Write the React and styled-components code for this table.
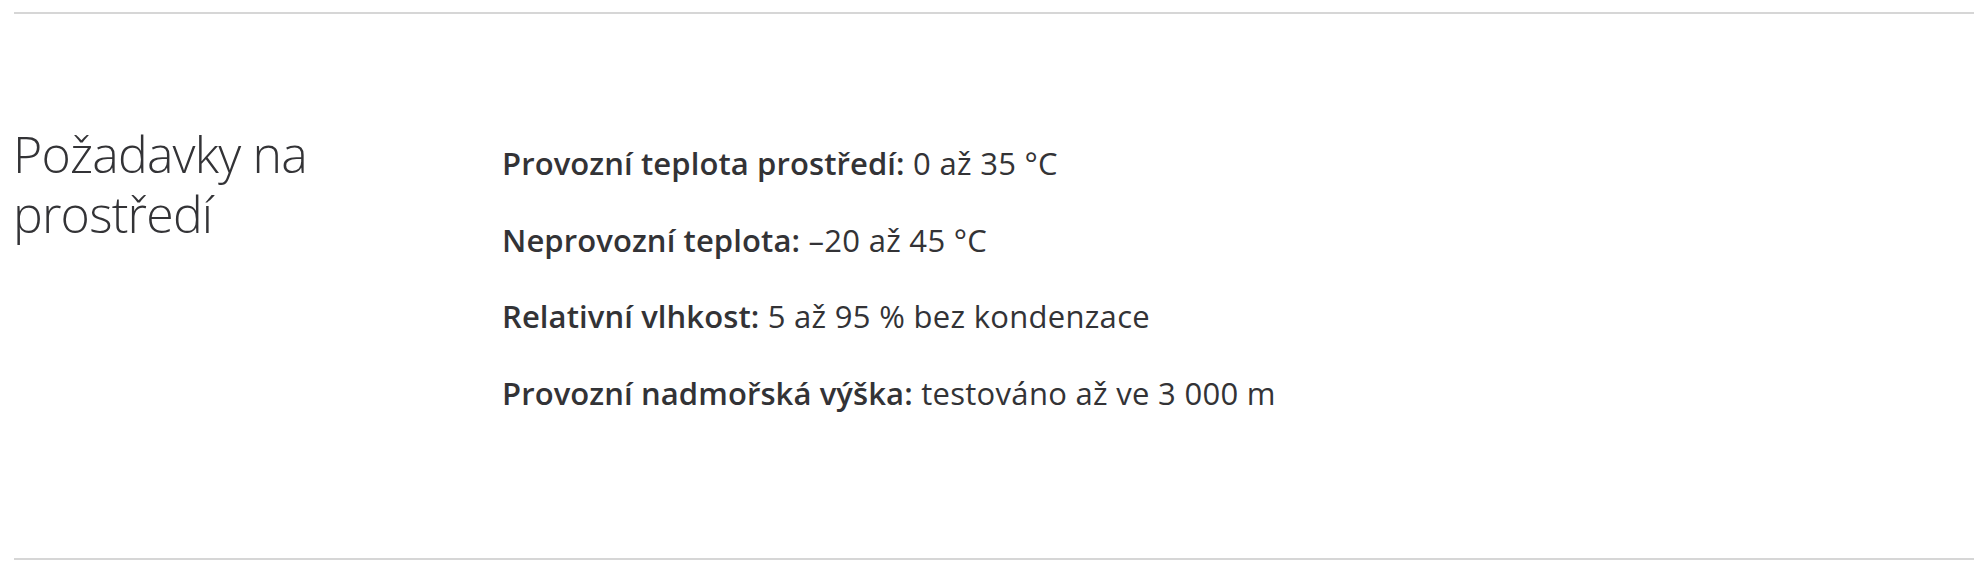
import React from "react";
import styled, { createGlobalStyle } from "styled-components";

const GlobalStyle = createGlobalStyle`
  html, body {
    margin: 0;
    padding: 0;
    background: #ffffff;
  }
  body {
    font-family: "Open Sans", "Noto Sans", "Liberation Sans", sans-serif;
    color: #333336;
    -webkit-font-smoothing: antialiased;
  }
`;

const Page = styled.div`
  padding: 12px 14px 0;
`;

const Section = styled.section`
  display: grid;
  grid-template-columns: 488px 1fr;
  align-items: start;
  border-top: 2px solid #d6d6d6;
  border-bottom: 2px solid #d6d6d6;
  padding: 110px 0 142px;
`;

const Heading = styled.h2`
  margin: 0 0 0 -1px;
  max-width: 420px;
  font-size: 50px;
  line-height: 60px;
  font-weight: 300;
  letter-spacing: -0.8px;
  color: #333336;
`;

const SpecList = styled.ul`
  list-style: none;
  margin: 16px 0 0;
  padding: 0;
  display: flex;
  flex-direction: column;
  gap: 30px;
`;

const SpecItem = styled.li`
  font-size: 31px;
  line-height: 46.5px;
  font-weight: 400;
  letter-spacing: 0.3px;
  color: #333336;
  white-space: nowrap;
`;

const Label = styled.strong`
  font-weight: 600;
  letter-spacing: 0.1px;
`;

const specs = [
  { label: "Provozní teplota prostředí:", value: "0 až 35 °C" },
  { label: "Neprovozní teplota:", value: "–20 až 45 °C" },
  { label: "Relativní vlhkost:", value: "5 až 95 % bez kondenzace" },
  { label: "Provozní nadmořská výška:", value: "testováno až ve 3 000 m" },
];

export default function App() {
  return (
    <>
      <GlobalStyle />
      <Page>
        <Section>
          <Heading>Požadavky na prostředí</Heading>
          <SpecList>
            {specs.map((s) => (
              <SpecItem key={s.label}>
                <Label>{s.label}</Label> {s.value}
              </SpecItem>
            ))}
          </SpecList>
        </Section>
      </Page>
    </>
  );
}
